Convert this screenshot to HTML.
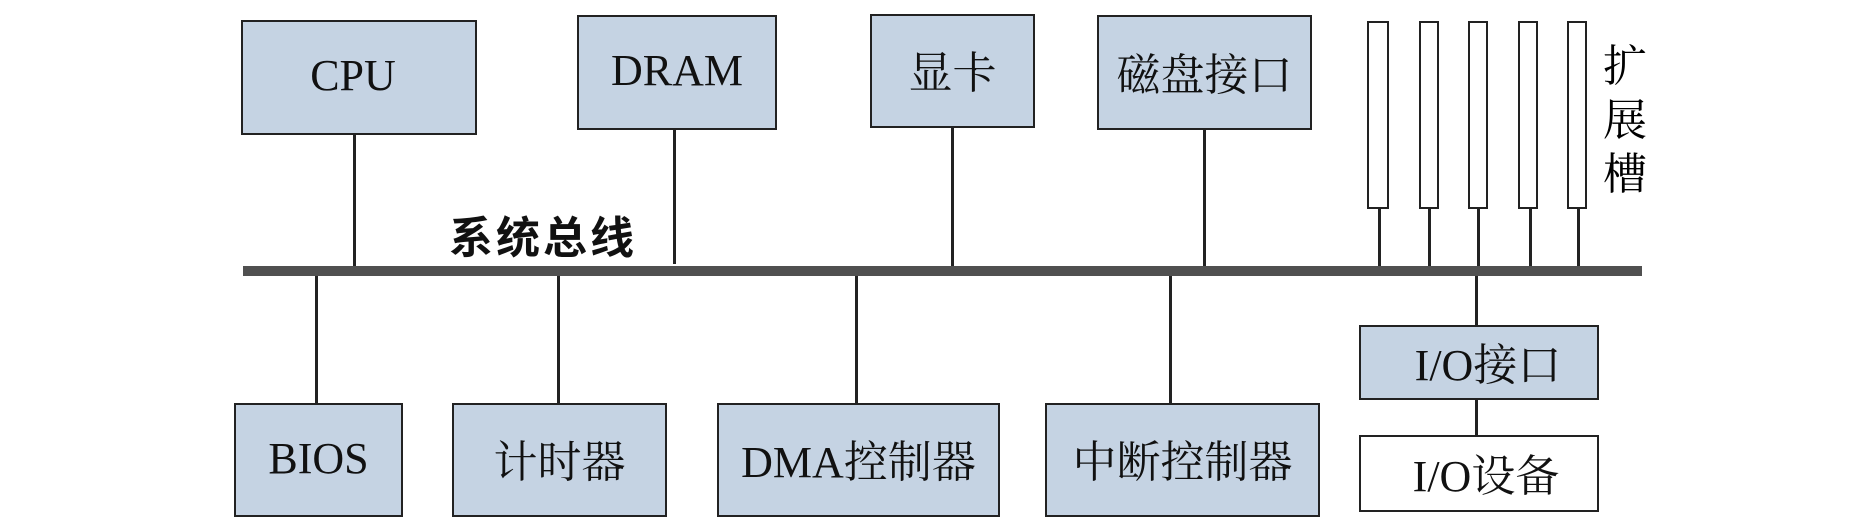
<!DOCTYPE html>
<html><head><meta charset="utf-8"><style>
body{margin:0;width:1864px;height:526px;background:#fff;position:relative;overflow:hidden;font-family:"Liberation Serif","Noto Serif CJK SC",serif;}
.b{position:absolute;box-sizing:border-box;border:2px solid #222;background:#c5d3e3;display:flex;align-items:center;justify-content:center;font-size:44px;color:#111;padding-bottom:4px;}
.w{background:#fff;}
.v{position:absolute;width:3px;background:#222;}
</style></head><body>
<div class="b" style="left:241px;top:20px;width:236px;height:115px;padding-right:12px">CPU</div>
<div class="b" style="left:577px;top:15px;width:200px;height:115px">DRAM</div>
<div class="b" style="left:870px;top:14px;width:165px;height:114px">显卡</div>
<div class="b" style="left:1097px;top:15px;width:215px;height:115px">磁盘接口</div>
<div class="v" style="left:353px;top:135px;height:132px"></div>
<div class="v" style="left:673px;top:130px;height:134px"></div>
<div class="v" style="left:951px;top:128px;height:139px"></div>
<div class="v" style="left:1203px;top:130px;height:137px"></div>
<div style="position:absolute;left:449px;top:208px;font-size:44px;letter-spacing:3px;font-family:'Noto Sans CJK SC',sans-serif;font-weight:bold;line-height:52px;color:#111">系统总线</div>
<div style="position:absolute;left:243px;top:266px;width:1399px;height:10px;background:#505050"></div>
<div class="b w" style="left:1367px;top:21px;width:22px;height:188px"></div>
<div class="b w" style="left:1419px;top:21px;width:20px;height:188px"></div>
<div class="b w" style="left:1468px;top:21px;width:20px;height:188px"></div>
<div class="b w" style="left:1518px;top:21px;width:20px;height:188px"></div>
<div class="b w" style="left:1567px;top:21px;width:20px;height:188px"></div>
<div class="v" style="left:1378px;top:208px;height:58px"></div>
<div class="v" style="left:1428px;top:208px;height:58px"></div>
<div class="v" style="left:1477px;top:208px;height:58px"></div>
<div class="v" style="left:1529px;top:208px;height:58px"></div>
<div class="v" style="left:1577px;top:208px;height:58px"></div>
<div style="position:absolute;left:1603px;top:40px;font-size:44px;line-height:54px;width:50px;">扩<br>展<br>槽</div>
<div class="v" style="left:315px;top:276px;height:128px"></div>
<div class="v" style="left:557px;top:276px;height:128px"></div>
<div class="v" style="left:855px;top:276px;height:128px"></div>
<div class="v" style="left:1169px;top:276px;height:128px"></div>
<div class="v" style="left:1475px;top:276px;height:50px"></div>
<div class="v" style="left:1475px;top:398px;height:38px"></div>
<div class="b" style="left:234px;top:403px;width:169px;height:114px">BIOS</div>
<div class="b" style="left:452px;top:403px;width:215px;height:114px">计时器</div>
<div class="b" style="left:717px;top:403px;width:283px;height:114px">DMA控制器</div>
<div class="b" style="left:1045px;top:403px;width:275px;height:114px">中断控制器</div>
<div class="b" style="left:1359px;top:325px;width:240px;height:75px;padding-left:18px">I/O接口</div>
<div class="b w" style="left:1359px;top:435px;width:240px;height:77px;padding-left:14px">I/O设备</div>
</body></html>
